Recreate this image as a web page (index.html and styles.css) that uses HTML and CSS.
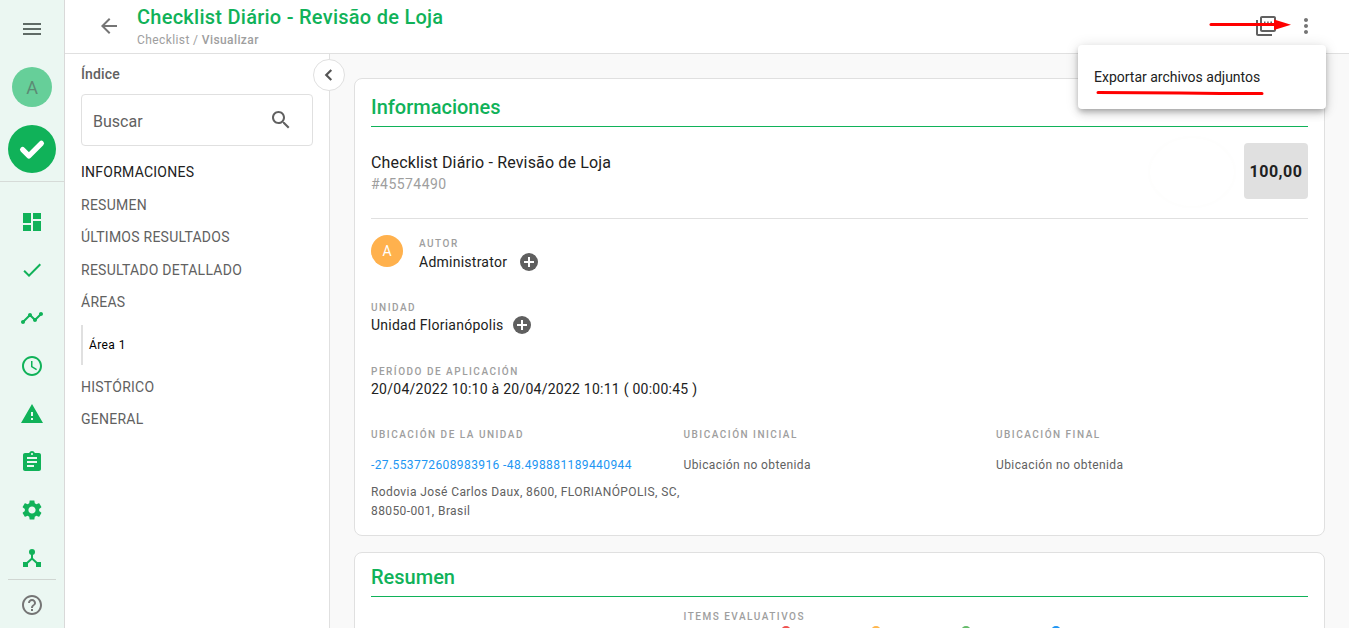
FILE: index.html
```html
<!DOCTYPE html>
<html lang="es">
<head>
<meta charset="utf-8">
<title>Checklist Diário - Revisão de Loja</title>
<link rel="stylesheet" href="styles.css">
</head>
<body>
<div class="app">
  <aside class="rail">
    <div class="rail-top">
      <svg class="ic-menu" viewBox="0 0 24 24" width="24" height="24"><path fill="#5f6b66" d="M3 18h18v-2H3v2zm0-5h18v-2H3v2zm0-7v2h18V6H3z"/></svg>
      <div class="rail-avatar">A</div>
      <div class="rail-logo"><svg viewBox="0 0 24 24" width="30" height="30"><path fill="none" stroke="#fff" stroke-width="4.2" stroke-linecap="round" stroke-linejoin="round" d="M4.5 12.5l5 5L19.5 7.5"/></svg></div>
    </div>
    <nav class="rail-nav">
      <svg viewBox="0 0 24 24"><path d="M3 13h8V3H3v10zm0 8h8v-6H3v6zm10 0h8V11h-8v10zm0-18v6h8V3h-8z"/></svg>
      <svg viewBox="0 0 24 24"><path d="M9 16.170L4.830 12l-1.420 1.410L9 19 21 7l-1.410-1.410z"/></svg>
      <svg viewBox="0 0 24 24"><path d="M23 8c0 1.100-.9 2-2 2-.18 0-.35-.02-.51-.07l-3.560 3.550c.05.160.07.340.07.520 0 1.100-.9 2-2 2s-2-.9-2-2c0-.18.02-.36.07-.52l-2.550-2.550c-.16.050-.34.070-.52.070s-.36-.02-.52-.07l-4.550 4.560c.05.160.07.330.07.510 0 1.100-.9 2-2 2s-2-.9-2-2 .9-2 2-2c.18 0 .35.020.51.070l4.560-4.550C8.020 9.360 8 9.180 8 9c0-1.100.9-2 2-2s2 .9 2 2c0 .18-.02.36-.07.52l2.550 2.550c.16-.05.34-.07.52-.07s.36.020.52.070l3.550-3.560C19.020 8.350 19 8.180 19 8c0-1.100.9-2 2-2s2 .9 2 2z"/></svg>
      <svg viewBox="0 0 24 24"><path d="M11.990 2C6.470 2 2 6.480 2 12s4.470 10 9.990 10C17.520 22 22 17.520 22 12S17.520 2 11.990 2zM12 20c-4.420 0-8-3.580-8-8s3.580-8 8-8 8 3.580 8 8-3.580 8-8 8zm.5-13H11v6l5.250 3.150.75-1.230-4.500-2.670z"/></svg>
      <svg viewBox="0 0 24 24"><path d="M1 21h22L12 2 1 21zm12-3h-2v-2h2v2zm0-4h-2v-4h2v4z"/></svg>
      <svg viewBox="0 0 24 24"><path d="M19 3h-4.180C14.400 1.840 13.300 1 12 1c-1.300 0-2.400.84-2.820 2H5c-1.100 0-2 .9-2 2v14c0 1.100.9 2 2 2h14c1.100 0 2-.9 2-2V5c0-1.100-.9-2-2-2zm-7 0c.55 0 1 .45 1 1s-.45 1-1 1-1-.45-1-1 .45-1 1-1zm2 14H7v-2h7v2zm3-4H7v-2h10v2zm0-4H7V7h10v2z"/></svg>
      <svg viewBox="0 0 24 24"><path d="M19.140 12.940c.04-.3.06-.61.06-.94 0-.32-.02-.64-.07-.94l2.030-1.580c.18-.14.23-.41.12-.61l-1.920-3.320c-.12-.22-.37-.29-.59-.22l-2.390.96c-.5-.38-1.030-.7-1.620-.94l-.36-2.540c-.04-.24-.24-.41-.48-.41h-3.840c-.24 0-.43.17-.47.41l-.36 2.540c-.59.24-1.130.57-1.620.94l-2.390-.96c-.22-.08-.47 0-.59.22L2.740 8.870c-.12.21-.08.47.12.61l2.030 1.580c-.05.3-.09.63-.09.94s.02.64.07.94l-2.030 1.580c-.18.14-.23.41-.12.61l1.920 3.320c.12.22.37.29.59.22l2.390-.96c.5.38 1.030.7 1.620.94l.36 2.540c.05.24.24.41.48.41h3.840c.24 0 .44-.17.47-.41l.36-2.540c.59-.24 1.130-.56 1.620-.94l2.390.96c.22.08.47 0 .59-.22l1.920-3.320c.12-.22.07-.47-.12-.61l-2.010-1.580zM12 15.600c-1.980 0-3.600-1.620-3.600-3.600s1.620-3.600 3.600-3.600 3.600 1.620 3.600 3.600-1.620 3.600-3.600 3.600z"/></svg>
      <svg viewBox="0 0 24 24"><circle cx="12" cy="6" r="3"/><path d="M12 8v4.500M12 12.500L6 18M12 12.500L18 18" fill="none" stroke="#10b259" stroke-width="2"/><path d="M3 16h5v5H3zM16 16h5v5h-5z"/></svg>
    </nav>
    <div class="rail-bottom">
      <svg viewBox="0 0 24 24" width="24" height="24"><path fill="#757575" d="M11 18h2v-2h-2v2zm1-16C6.480 2 2 6.480 2 12s4.480 10 10 10 10-4.480 10-10S17.520 2 12 2zm0 18c-4.410 0-8-3.590-8-8s3.590-8 8-8 8 3.590 8 8-3.590 8-8 8zm0-14c-2.210 0-4 1.790-4 4h2c0-1.100.9-2 2-2s2 .9 2 2c0 2-3 1.750-3 5h2c0-2.250 3-2.500 3-5 0-2.210-1.790-4-4-4z"/></svg>
    </div>
  </aside>

  <div class="content">
    <header class="topbar">
      <svg class="back" viewBox="0 0 24 24" width="24" height="24"><path fill="#757575" d="M20 11H7.830l5.590-5.590L12 4l-8 8 8 8 1.410-1.410L7.830 13H20v-2z"/></svg>
      <div class="titles">
        <h1>Checklist Diário - Revisão de Loja</h1>
        <div class="crumbs">Checklist / <b>Visualizar</b></div>
      </div>
      <svg class="pdf" viewBox="0 0 24 24" width="24" height="24"><path fill="#616161" d="M20 2H8c-1.100 0-2 .9-2 2v12c0 1.100.9 2 2 2h12c1.100 0 2-.9 2-2V4c0-1.100-.9-2-2-2zm0 14H8V4h12v12zM4 6H2v14c0 1.100.9 2 2 2h14v-2H4V6z"/><path fill="#616161" d="M10 7.500h1.500V9H10zM13.200 7.500h1.500V9h-1.500zM16.400 7.500H18V9h-1.600z"/></svg>
      <svg class="dots" viewBox="0 0 24 24" width="24" height="24"><path fill="#757575" d="M12 8c1.100 0 2-.9 2-2s-.9-2-2-2-2 .9-2 2 .9 2 2 2zm0 2c-1.100 0-2 .9-2 2s.9 2 2 2 2-.9 2-2-.9-2-2-2zm0 6c-1.100 0-2 .9-2 2s.9 2 2 2 2-.9 2-2-.9-2-2-2z"/></svg>
    </header>

    <div class="body">
      <section class="index">
        <div class="index-title">Índice</div>
        <div class="search">
          <span>Buscar</span>
          <svg viewBox="0 0 24 24" width="24" height="24"><path fill="#616161" d="M15.500 14h-.79l-.28-.27C15.410 12.590 16 11.110 16 9.500 16 5.910 13.090 3 9.500 3S3 5.910 3 9.500 5.910 16 9.500 16c1.610 0 3.090-.59 4.230-1.570l.27.28v.79l5 4.990L20.490 19l-4.990-5zm-6 0C7.010 14 5 11.990 5 9.500S7.010 5 9.500 5 14 7.010 14 9.500 11.990 14 9.500 14z"/></svg>
        </div>
        <ul class="toc">
          <li class="on">INFORMACIONES</li>
          <li>RESUMEN</li>
          <li>ÚLTIMOS RESULTADOS</li>
          <li>RESULTADO DETALLADO</li>
          <li>ÁREAS</li>
          <li class="sub"><span>Área 1</span></li>
          <li>HISTÓRICO</li>
          <li>GENERAL</li>
        </ul>
        <button class="collapse" type="button" aria-label="Recolher"><svg viewBox="0 0 24 24" width="22" height="22"><path fill="none" stroke="#555" stroke-width="2.4" d="M14.500 6.500L9 12l5.500 5.500"/></svg></button>
      </section>

      <main class="main">
        <article class="card">
          <h2>Informaciones</h2>
          <div class="head-row">
            <div>
              <div class="doc-title">Checklist Diário - Revisão de Loja</div>
              <div class="doc-id">#45574490</div>
            </div>
            <div class="head-side">
              <div class="blob"></div>
              <div class="score">100,00</div>
            </div>
          </div>
          <div class="author">
            <div class="avatar">A</div>
            <div>
              <div class="label">AUTOR</div>
              <div class="value">Administrator <i class="plus"></i></div>
            </div>
          </div>
          <div class="block first">
            <div class="label">UNIDAD</div>
            <div class="value">Unidad Florianópolis <i class="plus tight"></i></div>
          </div>
          <div class="block">
            <div class="label">PERÍODO DE APLICACIÓN</div>
            <div class="value">20/04/2022 10:10 à 20/04/2022 10:11 ( 00:00:45 )</div>
          </div>
          <div class="locs">
            <div>
              <div class="label">UBICACIÓN DE LA UNIDAD</div>
              <div class="loc-text link">-27.553772608983916 -48.498881189440944</div>
              <div class="addr">Rodovia José Carlos Daux, 8600, FLORIANÓPOLIS, SC, 88050-001, Brasil</div>
            </div>
            <div>
              <div class="label">UBICACIÓN INICIAL</div>
              <div class="loc-text">Ubicación no obtenida</div>
            </div>
            <div>
              <div class="label">UBICACIÓN FINAL</div>
              <div class="loc-text">Ubicación no obtenida</div>
            </div>
          </div>
        </article>
        <article class="card card-two">
          <h2>Resumen</h2>
          <div class="summary">
            <div class="label">ITEMS EVALUATIVOS</div>
            <div class="pips"><i class="r"></i><i class="y"></i><i class="g"></i><i class="b"></i></div>
          </div>
        </article>
      </main>
    </div>
  </div>

  <div class="menu"><span>Exportar archivos adjuntos</span></div>
  <svg class="marks" width="1349" height="628" viewBox="0 0 1349 628">
    <path d="M1211 24.500L1276 24.500" stroke="#f00" stroke-width="3" fill="none" stroke-linecap="round"/>
    <path d="M1274 19.500L1291 24.800 1274 30z" fill="#f00"/>
    <path d="M1098 92.500Q1140 92.500 1180 93T1262 93.500" stroke="#f00" stroke-width="3" fill="none" stroke-linecap="round"/>
  </svg>
</div>
</body>
</html>
```

FILE: styles.css
```css
* { box-sizing: border-box; }
html, body { margin: 0; height: 100%; overflow: hidden; }
body { font-family: Roboto, "Liberation Sans", sans-serif; background: #fff; color: #212121; }
.app { position: relative; display: flex; width: 1349px; height: 628px; overflow: hidden; }

.rail { width: 65px; flex: none; background: #ebf7f2; border-right: 1px solid #d9d9d9; display: flex; flex-direction: column; align-items: center; }
.rail-top { width: 100%; height: 182px; border-bottom: 1px solid #d6dbd8; display: flex; flex-direction: column; align-items: center; padding-top: 17px; }
.ic-menu { display: block; }
.rail-avatar { width: 40px; height: 40px; margin-top: 26px; border-radius: 50%; background: #66cf99; color: #5c8a74; font-size: 18px; display: flex; align-items: center; justify-content: center; }
.rail-logo { width: 48px; height: 48px; margin-top: 18px; border-radius: 50%; background: #10b259; display: flex; align-items: center; justify-content: center; }
.rail-nav { display: flex; flex-direction: column; align-items: center; gap: 24px; padding-top: 28px; }
.rail-nav svg { width: 24px; height: 24px; fill: #10b259; display: block; }
.rail-bottom { width: 48px; margin-top: 9px; padding-top: 13px; border-top: 1px solid #d0d6d2; display: flex; justify-content: center; }

.content { flex: 1; min-width: 0; display: flex; flex-direction: column; }
.topbar { height: 54px; flex: none; border-bottom: 1px solid #e0e0e0; display: flex; align-items: flex-start; padding-left: 32px; }
.back { margin-top: 14px; flex: none; }
.titles { margin-left: 16px; flex: 1; padding-top: 5px; }
h1 { margin: 0; font-size: 20px; line-height: 24px; font-weight: 500; letter-spacing: .26px; color: #10b259; }
.crumbs { margin-top: 4px; font-size: 12px; line-height: 14px; letter-spacing: .4px; color: #9e9e9e; }
.crumbs b { font-weight: 500; }
.pdf { margin-top: 14px; flex: none; }
.dots { margin: 14px 31px 0 16px; flex: none; }

.body { flex: 1; min-height: 0; display: flex; }
.index { position: relative; width: 265px; flex: none; border-right: 1px solid #e0e0e0; padding: 12px 16px 0; background: #fff; }
.index-title { font-size: 14px; line-height: 16px; font-weight: 500; letter-spacing: .15px; color: #616161; }
.search { margin-top: 12px; height: 52px; border: 1px solid #e0e0e0; border-radius: 4px; display: flex; align-items: center; justify-content: space-between; padding: 2px 19px 0 11px; font-size: 16px; color: #616161; }
.search svg { margin-top: -2px; }
.toc { list-style: none; margin: 9px 0 0; padding: 0; font-size: 14px; letter-spacing: .25px; color: #616161; }
.toc li { height: 32.500px; line-height: 34px; }
.toc .on { color: #212121; }
.toc .sub { height: 40px; margin: 7px 0 5px; border-left: 2px solid #e0e0e0; padding-left: 6px; line-height: 40px; font-size: 12px; letter-spacing: .4px; color: #000; }
.collapse { position: absolute; right: -16px; top: 5px; width: 32px; height: 32px; padding: 0; border: 1px solid #e0e0e0; border-radius: 50%; background: #fff; display: flex; align-items: center; justify-content: center; }

.main { flex: 1; min-width: 0; background: #f9f9f9; padding: 24px 24px 0; overflow: hidden; }
.card { background: #fff; border: 1px solid #e0e0e0; border-radius: 8px; padding: 0 16px; height: 458px; }
.card-two { margin-top: 16px; height: 120px; }
h2 { margin: 0; height: 48px; border-bottom: 1px solid #10b259; font-size: 20px; line-height: 56px; font-weight: 500; color: #10b259; }
.card-two h2 { height: 44px; line-height: 48px; }
.head-row { height: 92px; border-bottom: 1px solid #e0e0e0; display: flex; justify-content: space-between; align-items: flex-start; padding-top: 16px; }
.doc-title { font-size: 16px; line-height: 20px; letter-spacing: .15px; color: #212121; padding-top: 10px; }
.doc-id { margin-top: 2px; font-size: 14px; line-height: 18px; letter-spacing: .45px; color: #9e9e9e; }
.head-side { display: flex; align-items: flex-start; gap: 10px; }
.blob { width: 84px; height: 68px; margin-top: -5px; border-radius: 50%; background: #fff; box-shadow: 0 0 5px rgba(120,110,90,.025); }
.score { width: 64px; height: 56px; background: #e0e0e0; border-radius: 4px; display: flex; align-items: center; justify-content: center; font-size: 16px; font-weight: 700; letter-spacing: .5px; color: #212121; }
.author { display: flex; gap: 16px; margin-top: 16px; }
.avatar { width: 32px; height: 32px; border-radius: 50%; background: #ffb14d; color: #fff; font-size: 14px; display: flex; align-items: center; justify-content: center; }
.label { font-size: 10px; line-height: 12px; letter-spacing: 1.500px; color: #9e9e9e; font-weight: 500; padding-top: 3px; }
.value { font-size: 14px; line-height: 22px; letter-spacing: .25px; color: #212121; display: flex; align-items: center; white-space: pre; }
.author .value { margin-top: 1px; }
.plus { position: relative; display: inline-block; width: 18px; height: 18px; margin-left: 9px; border-radius: 50%; background: #5f5f5f; }
.plus.tight { margin-left: 6px; }
.plus::before, .plus::after { content: ""; position: absolute; background: #fff; }
.plus::before { left: 4px; right: 4px; top: 8px; height: 2px; }
.plus::after { top: 4px; bottom: 4px; left: 8px; width: 2px; }
.block { margin-top: 27px; }
.block.first { margin-top: 26px; }
.locs { display: grid; grid-template-columns: repeat(3, 312.500px); margin-top: 26px; }
.loc-text { margin-top: 15px; font-size: 12px; line-height: 18px; letter-spacing: .4px; color: #616161; }
.link { color: #2196f3; }
.addr { margin-top: 9px; width: 312px; font-size: 12px; line-height: 19px; letter-spacing: .4px; color: #616161; }
.summary { margin-left: 312.500px; padding-top: 11px; }
.pips { display: flex; gap: 80px; margin: 3px 0 0 97px; }
.pips i { width: 10px; height: 10px; border-radius: 50%; }
.pips .r { background: #ef5350; }
.pips .y { background: #ffb74d; }
.pips .g { background: #66bb6a; }
.pips .b { background: #2196f3; }

.menu { position: absolute; left: 1078px; top: 45px; width: 248px; height: 64px; background: #fff; border-radius: 4px; box-shadow: 0 3px 5px -1px rgba(0,0,0,.2), 0 5px 8px rgba(0,0,0,.14), 0 1px 14px rgba(0,0,0,.12); padding: 24px 16px 0; font-size: 14px; line-height: 16px; color: #212121; }
.marks { position: absolute; left: 0; top: 0; pointer-events: none; }
```
